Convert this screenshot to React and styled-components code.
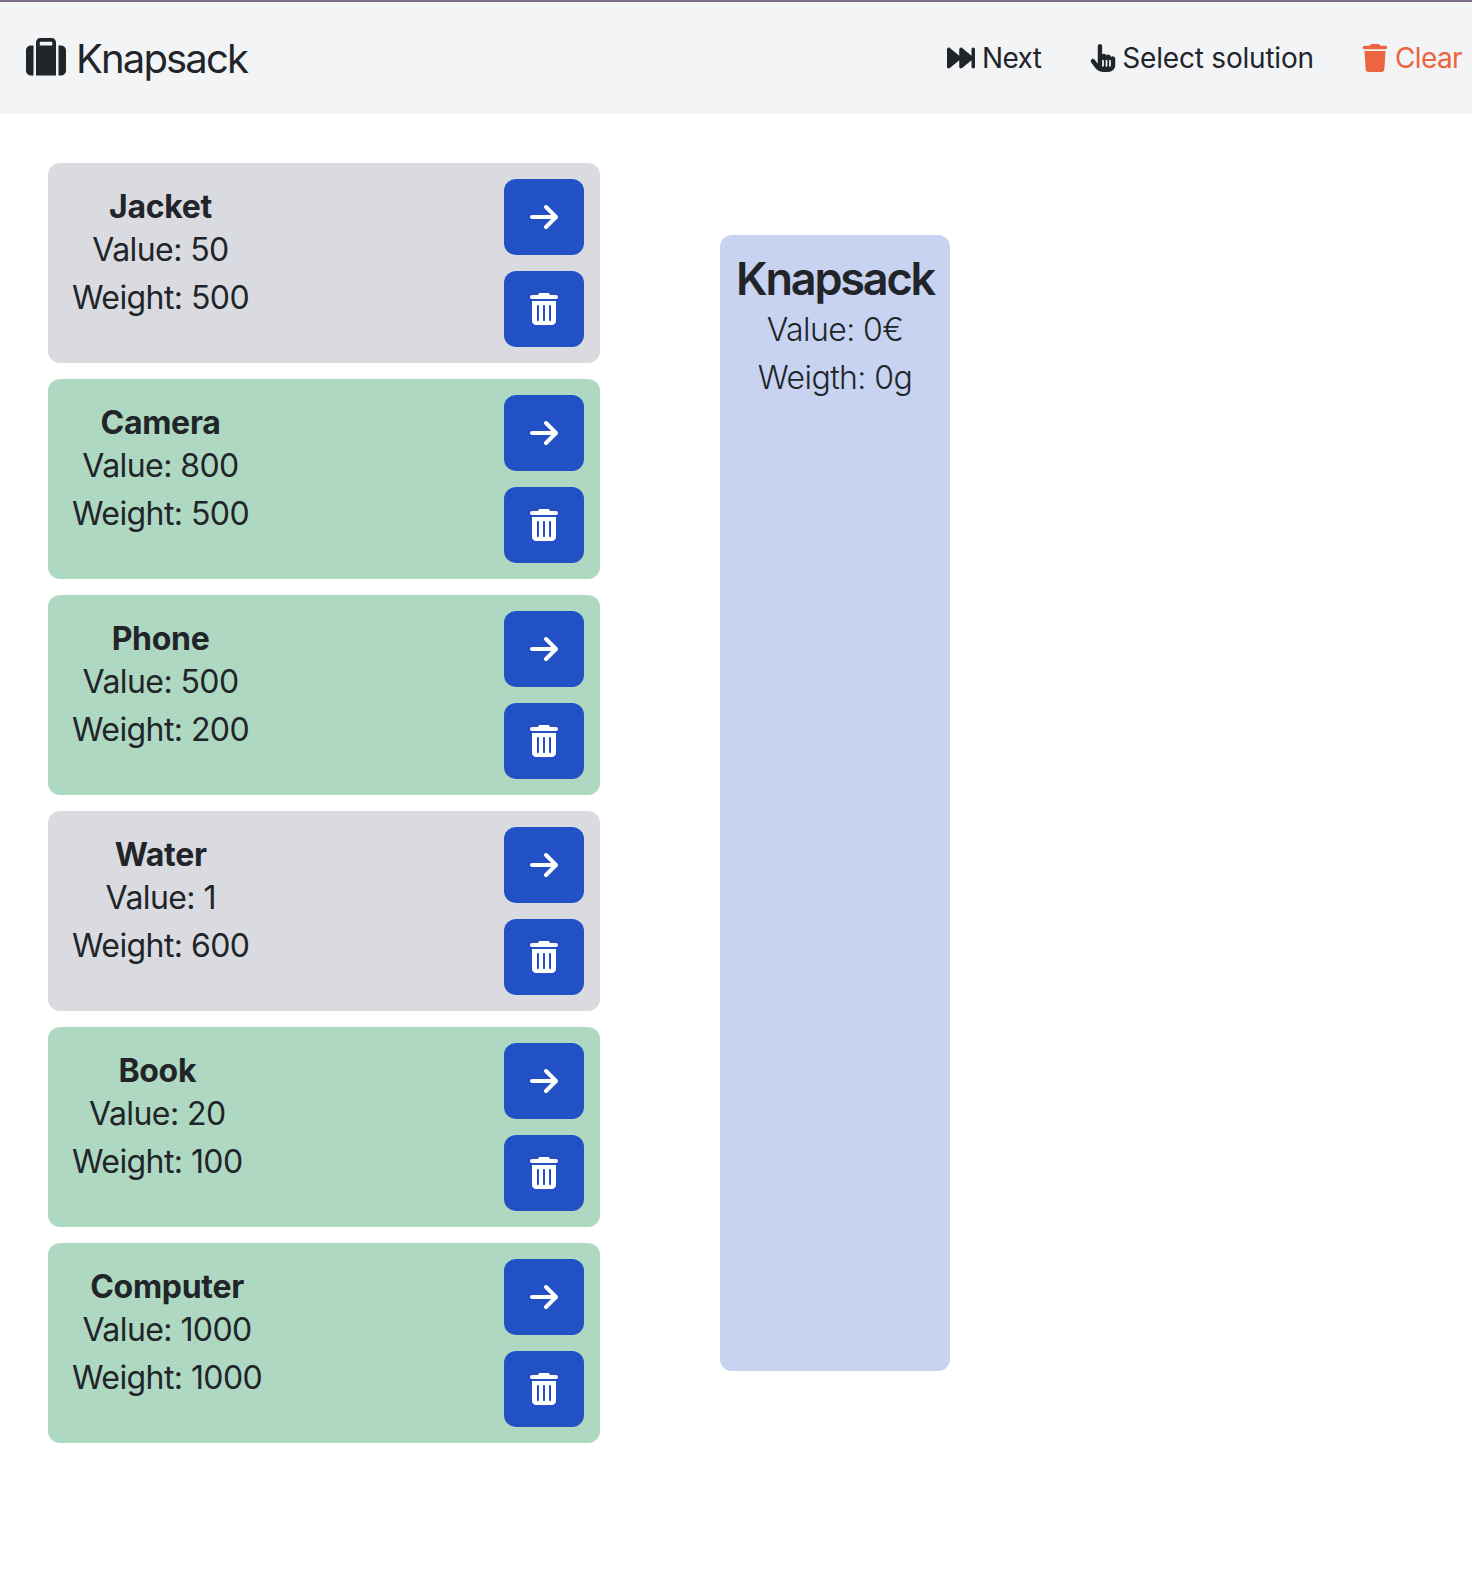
import React from "react";
import styled, { createGlobalStyle } from "styled-components";
import {
  FaArrowRight,
  FaForwardFast,
  FaHandPointer,
  FaSuitcase,
  FaTrash,
  FaTrashCan,
} from "react-icons/fa6";

const GlobalStyle = createGlobalStyle`
  *, *::before, *::after { box-sizing: border-box; }
  body {
    margin: 0;
    background: #fff;
    color: #212529;
    font-family: Inter, "Liberation Sans", sans-serif;
    font-size: 32px;
    line-height: 48px;
  }
`;

const Navbar = styled.header`
  display: flex;
  align-items: center;
  justify-content: space-between;
  height: 114px;
  padding: 0 10px 0 26px;
  border-top: 2px solid #7b6e87;
  background: #f3f4f6;
`;

const Brand = styled.div`
  display: flex;
  align-items: center;
  gap: 10px;
  padding-top: 2px;
  font-size: 40px;
  line-height: 60px;
  letter-spacing: -1.85px;

  svg { display: block; margin-top: -3px; }
`;

const NavLinks = styled.nav`
  display: flex;
  gap: 47.5px;
`;

const NavLink = styled.a`
  display: flex;
  align-items: center;
  gap: ${(p) => p.$gap || "5.5px"};
  font-size: 28px;
  line-height: 42px;
  letter-spacing: ${(p) => p.$tracking || "-0.6px"};
  color: ${(p) => (p.$danger ? "#ec6440" : "#212529")};
  white-space: nowrap;

  svg { display: block; margin-top: -1px; }
`;

const Main = styled.main`
  display: flex;
  align-items: flex-start;
  gap: 120px;
  padding: 49px 48px 0;
`;

const ItemList = styled.ul`
  display: flex;
  flex-direction: column;
  gap: 16px;
  width: 552px;
  margin: 0;
  padding: 0;
  list-style: none;
`;

const ItemCard = styled.li`
  display: flex;
  justify-content: space-between;
  height: 200px;
  padding: 16px;
  border-radius: 12px;
  background: ${(p) => (p.$selected ? "#aed8c1" : "#dadbe1")};
`;

const ItemInfo = styled.div`
  padding: 9px 8px 7px;
  text-align: center;
  white-space: nowrap;
`;

const ItemName = styled.h5`
  margin: 0;
  font-size: 32px;
  font-weight: 700;
  line-height: 38.4px;
  letter-spacing: -0.3px;
`;

const Stat = styled.div`
  font-weight: ${(p) => (p.$light ? 340 : 400)};
  letter-spacing: -0.58px;
`;

const ItemActions = styled.div`
  display: flex;
  flex-direction: column;
  gap: 16px;
`;

const ActionButton = styled.button`
  display: flex;
  align-items: center;
  justify-content: center;
  width: 80px;
  height: 76px;
  padding: 0;
  border: 0;
  border-radius: 12px;
  background: #2250c5;
  color: #fff;
`;

const KnapsackPanel = styled.section`
  width: 230px;
  height: 1136px;
  margin-top: 72px;
  padding: 16px;
  border-radius: 12px;
  background: #c8d3f1;
  text-align: center;
  white-space: nowrap;
`;

const PanelTitle = styled.h2`
  margin: 0;
  font-size: 45px;
  font-weight: 600;
  line-height: 55px;
  letter-spacing: -2.2px;
`;

const items = [
  { name: "Jacket", value: 50, weight: 500, selected: false },
  { name: "Camera", value: 800, weight: 500, selected: true },
  { name: "Phone", value: 500, weight: 200, selected: true },
  { name: "Water", value: 1, weight: 600, selected: false },
  { name: "Book", value: 20, weight: 100, selected: true },
  { name: "Computer", value: 1000, weight: 1000, selected: true },
];

export default function App() {
  return (
    <>
      <GlobalStyle />
      <Navbar>
        <Brand>
          <FaSuitcase size={40} />
          <span>Knapsack</span>
        </Brand>
        <NavLinks>
          <NavLink $gap="7px">
            <FaForwardFast size={28} />
            <span>Next</span>
          </NavLink>
          <NavLink $tracking="-0.2px">
            <FaHandPointer width={24.5} height={28} />
            <span>Select solution</span>
          </NavLink>
          <NavLink $danger>
            <FaTrash width={24.5} height={28} />
            <span>Clear</span>
          </NavLink>
        </NavLinks>
      </Navbar>
      <Main>
        <ItemList>
          {items.map((item) => (
            <ItemCard key={item.name} $selected={item.selected}>
              <ItemInfo>
                <ItemName>{item.name}</ItemName>
                <Stat>Value: {item.value}</Stat>
                <Stat>Weight: {item.weight}</Stat>
              </ItemInfo>
              <ItemActions>
                <ActionButton aria-label="Add to knapsack">
                  <FaArrowRight size={32} />
                </ActionButton>
                <ActionButton aria-label="Delete item">
                  <FaTrashCan size={32} />
                </ActionButton>
              </ItemActions>
            </ItemCard>
          ))}
        </ItemList>
        <KnapsackPanel>
          <PanelTitle>Knapsack</PanelTitle>
          <Stat $light>Value: 0€</Stat>
          <Stat $light>Weigth: 0g</Stat>
        </KnapsackPanel>
      </Main>
    </>
  );
}
